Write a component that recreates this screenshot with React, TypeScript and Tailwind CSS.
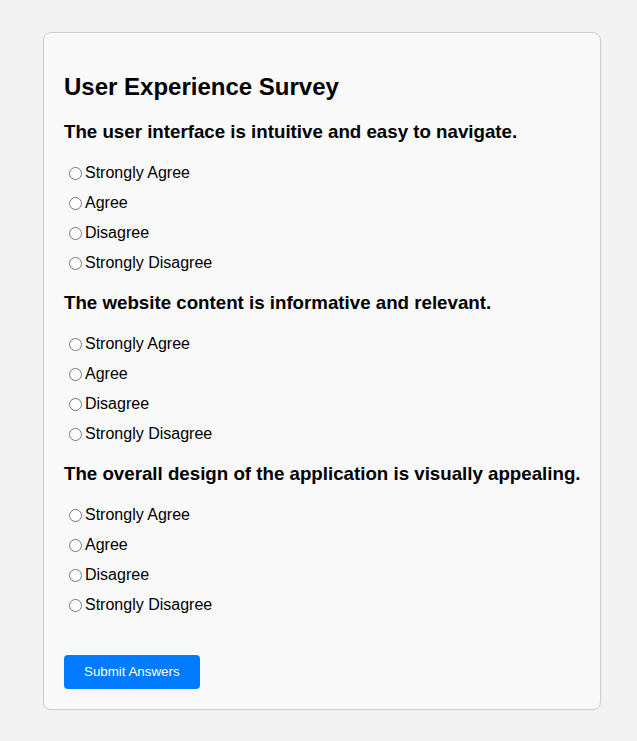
import { useState } from 'react'

const questions = [
  'The user interface is intuitive and easy to navigate.',
  'The website content is informative and relevant.',
  'The overall design of the application is visually appealing.',
]

const options = ['Strongly Agree', 'Agree', 'Disagree', 'Strongly Disagree']

export default function App() {
  const [answers, setAnswers] = useState<Record<number, string>>({})

  return (
    <main className="min-h-screen bg-[#f2f2f2] pt-[32px] pb-[31px] font-['Liberation_Sans',Arial,sans-serif] text-black">
      <div className="ml-[43px] w-[558px] rounded-lg border border-[#cccccc] bg-[#f9f9f9] p-5">
        <h1 className="mt-5 text-[24px] font-bold leading-[28px]">User Experience Survey</h1>

        {questions.map((q, qi) => (
          <section key={q} className={qi === 0 ? 'mt-[20px]' : 'mt-[14px]'}>
            <h3 className="mb-[15px] whitespace-nowrap text-[18.72px] font-bold leading-[22px]">{q}</h3>
            {options.map((opt) => (
              <label key={opt} className="flex h-[30px] items-center text-[16px]">
                <input
                  type="radio"
                  name={`q${qi}`}
                  className="ml-[5px] mr-[3px] h-[13px] w-[13px]"
                  checked={answers[qi] === opt}
                  onChange={() => setAnswers((prev) => ({ ...prev, [qi]: opt }))}
                />
                {opt}
              </label>
            ))}
          </section>
        ))}

        <button className="mt-[35px] h-[34px] rounded bg-[#007bff] px-5 text-[13.33px] text-white">
          Submit Answers
        </button>
      </div>
    </main>
  )
}
